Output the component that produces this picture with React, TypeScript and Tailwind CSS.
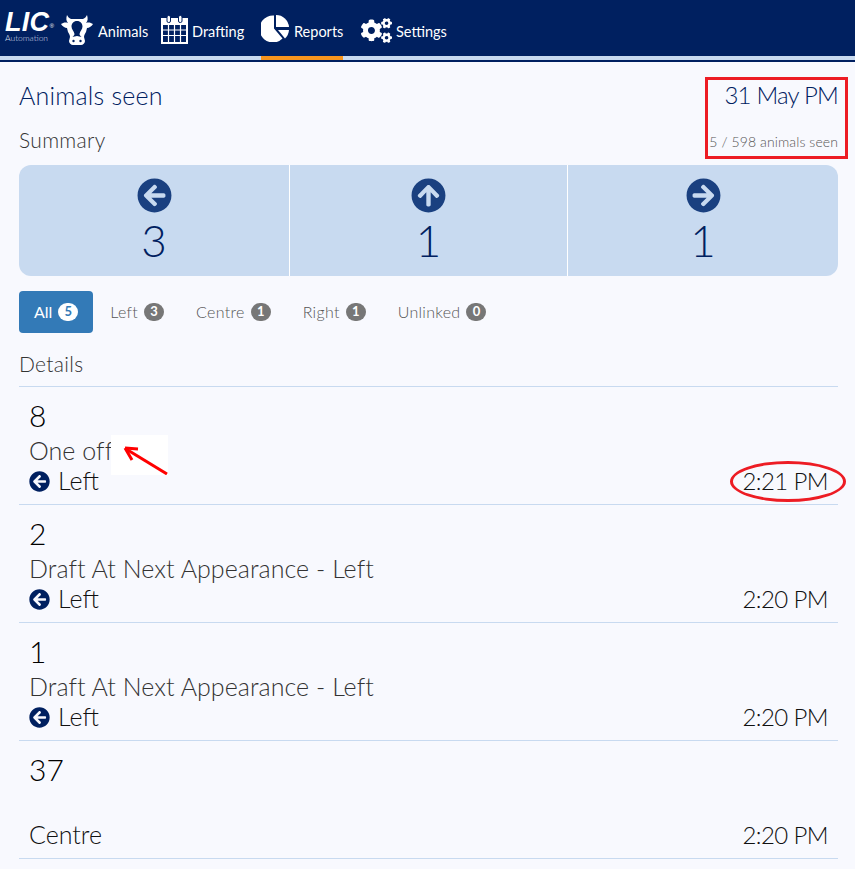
import type { ReactNode } from "react";
import { FaArrowCircleLeft, FaArrowCircleRight, FaArrowCircleUp, FaCogs } from "react-icons/fa";

const font = "font-['Lato',sans-serif]";

const tabs = [
  { label: "All", count: 5, active: true },
  { label: "Left", count: 3 },
  { label: "Centre", count: 1 },
  { label: "Right", count: 1 },
  { label: "Unlinked", count: 0 },
];

const rows = [
  { id: "8", reason: "One off", dir: "Left", time: "2:21 PM" },
  { id: "2", reason: "Draft At Next Appearance - Left", dir: "Left", time: "2:20 PM" },
  { id: "1", reason: "Draft At Next Appearance - Left", dir: "Left", time: "2:20 PM" },
  { id: "37", reason: "", dir: "Centre", time: "2:20 PM" },
];

function Cow() {
  return (
    <svg width="32" height="30" viewBox="0 0 32 30" className="shrink-0">
      <path
        fill="#fff"
        d="M0 9C2 8 4 7 7 8C5 6 5 3 6 0C7 2 8 3 10 4H22C24 3 25 2 26 0C27 3 27 6 25 8C28 7 30 8 32 9C31 11 28 13 26 13L25 17C24 19 23 20 23 22L24 26C24 28 22 30 20 30H12C10 30 8 28 8 26L9 22C9 20 8 19 7 17L6 13C4 13 1 11 0 9Z"
      />
      <path fill="#002060" d="M16 6c-3.500 0-5.500 2.500-5.500 5.500 0 3 2.500 4.500 3 7.500 0 1-1 2-2 3 1 0 3-1 4.500-1s3.500 1 4.500 1c-1-1-2-2-2-3 .5-3 3-4.500 3-7.500C21.500 8.500 19.500 6 16 6z" />
      <circle cx="12.500" cy="26" r="1.200" fill="#002060" />
      <circle cx="19.500" cy="26" r="1.200" fill="#002060" />
    </svg>
  );
}

function Calendar() {
  return (
    <svg width="27" height="29" viewBox="0 0 27 29" className="shrink-0">
      <rect x="1" y="4" width="25" height="24" fill="none" stroke="#fff" strokeWidth="2" />
      <rect x="1" y="4" width="25" height="6" fill="#fff" />
      <rect x="6" y="0.500" width="3.500" height="7" rx="1.500" fill="#fff" stroke="#002060" />
      <rect x="17.500" y="0.500" width="3.500" height="7" rx="1.500" fill="#fff" stroke="#002060" />
      <path stroke="#fff" strokeWidth="1.200" fill="none" d="M7.500 10v17M13.500 10v17M19.500 10v17M2 15h23M2 20.500h23" />
    </svg>
  );
}

function Pie() {
  return (
    <svg width="28" height="27" viewBox="0 0 28 27" className="shrink-0">
      <path fill="#fff" d="M13 0.500v13l8.500 10A13.500 13.500 0 1 1 13 0.500z" />
      <path fill="#fff" d="M15 0a13 13 0 0 1 13 12H15z" />
      <path fill="#fff" d="M17 15h11a13 13 0 0 1-4 8.500z" />
    </svg>
  );
}

function NavItem({ icon, label, active, gap }: { icon: ReactNode; label: string; active?: boolean; gap: string }) {
  return (
    <div className={`relative flex h-14 w-[100px] items-center ${gap}`}>
      <div className="flex h-[30px] items-start self-start pt-[15px]">{icon}</div>
      <span className="pt-[8px] text-[14.5px] font-normal text-white">{label}</span>
      {active ? <div className="absolute -bottom-1 left-0 h-1 w-[82px] bg-[#f7941d]" /> : null}
    </div>
  );
}

function SummaryCell({ icon, n, className }: { icon: ReactNode; n: string; className: string }) {
  return (
    <div className={`flex flex-col items-center pt-[13px] ${className}`}>
      <div className="text-[35px] text-[#1a4080]">{icon}</div>
      <div className="mt-[1px] text-[44px] leading-[52px] font-light text-[#002060]">{n}</div>
    </div>
  );
}

export default function App() {
  return (
    <div className={`relative h-[869px] overflow-hidden bg-[#f8f9fe] ${font}`}>
      <header className="border-b-2 border-[#002060]">
        <nav className="flex h-14 items-start bg-[#002060] pl-[5px]">
          <div className="mr-[6px] flex w-[50px] flex-col pt-[13px] text-white">
            <span className="font-['Liberation_Sans',sans-serif] text-[27px] leading-[18px] font-bold tracking-[0.3px] italic">
              LIC<sup className="text-[6px] font-normal">®</sup>
            </span>
            <span className="pt-[3px] text-[8.5px] leading-[9px] font-light text-[#d5dbe8]">Automation</span>
          </div>
          <NavItem icon={<Cow />} label="Animals" gap="gap-[5px]" />
          <NavItem icon={<Calendar />} label="Drafting" gap="gap-[4px]" />
          <NavItem icon={<Pie />} label="Reports" active gap="gap-[5px]" />
          <NavItem icon={<FaCogs className="text-[31px] text-white" />} label="Settings" gap="gap-[4px]" />
        </nav>
        <div className="h-1 bg-[#c8daf0]" />
      </header>

      <main className="pr-[17px] pl-[19px]">
        <div className="flex items-center justify-between pt-[17px]">
          <h1 className="text-[25px] leading-[32px] font-light tracking-[0.2px] text-[#002060]">Animals seen</h1>
          <div className="text-[24px] leading-[32px] font-light tracking-[-0.8px] text-[#002060]">31 May PM</div>
        </div>
        <div className="mt-[16px] flex items-center justify-between">
          <h2 className="text-[21px] leading-[26px] font-light tracking-[0.3px] text-[#333]">Summary</h2>
          <span className="mt-[2px] text-[14px] font-light tracking-[0.1px] text-[#555]">5 / 598 animals seen</span>
        </div>

        <div className="mt-[12px] flex h-[111px] rounded-xl bg-[#c8daf0]">
          <SummaryCell icon={<FaArrowCircleLeft />} n="3" className="w-[271px] border-r border-white" />
          <SummaryCell icon={<FaArrowCircleUp />} n="1" className="w-[278px] border-r border-white" />
          <SummaryCell icon={<FaArrowCircleRight />} n="1" className="flex-1" />
        </div>

        <div className="mt-[15px] flex h-[42px] items-center gap-[2px]">
          {tabs.map((t) => (
            <div
              key={t.label}
              className={`flex h-[42px] items-center gap-[6px] rounded px-[15px] text-[16px] ${
                t.active ? "bg-[#337ab7] text-white" : "font-light tracking-[0.3px] text-[#555]"
              }`}
            >
              {t.label}
              <span
                className={`flex h-[18px] min-w-[20px] items-center justify-center rounded-full px-[6px] text-[13px] font-bold tracking-normal ${
                  t.active ? "bg-white text-[#337ab7]" : "bg-[#777] text-white"
                }`}
              >
                {t.count}
              </span>
            </div>
          ))}
        </div>

        <h2 className="mt-[18px] text-[21px] leading-[26px] font-light tracking-[0.3px] text-[#333]">Details</h2>

        <div className="mt-[9px] border-t border-[#c8daf0]">
          {rows.map((r) => (
            <div key={r.id} className="flex h-[118px] flex-col border-b border-[#c8daf0] px-[10px] pt-[13px]">
              <div className="text-[30px] leading-[30px] font-light text-black">{r.id}</div>
              <div className="mt-[5px] h-[30px] text-[25px] leading-[30px] font-light tracking-[0.05px] text-[#333]">{r.reason}</div>
              <div className="mt-[1px] flex h-[30px] items-center justify-between text-[25px] font-light text-[#111]">
                <span className="flex items-center gap-2">
                  {r.dir === "Left" ? <FaArrowCircleLeft className="text-[21px] text-[#002060]" /> : null}
                  {r.dir}
                </span>
                <span className="text-[24px] tracking-[-0.6px]">{r.time}</span>
              </div>
            </div>
          ))}
        </div>
      </main>

      {/* annotations drawn on top of the screenshot */}
      <div className="absolute top-[77px] left-[705px] h-[82px] w-[143px] border-[3px] border-[#ed1c24]" />
      <div className="absolute top-[461px] left-[730px] h-[41px] w-[116px] rounded-[50%] border-[3px] border-[#ed1c24]" />
      <div className="absolute top-[435px] left-[111px] h-[40px] w-[57px] bg-white">
        <svg width="57" height="40" viewBox="0 0 57 40">
          <path d="M56 39L15 14" stroke="#f00" strokeWidth="3" fill="none" />
          <path d="M14 13L27 14M14 13L21 25" stroke="#f00" strokeWidth="3" fill="none" />
        </svg>
      </div>
    </div>
  );
}
